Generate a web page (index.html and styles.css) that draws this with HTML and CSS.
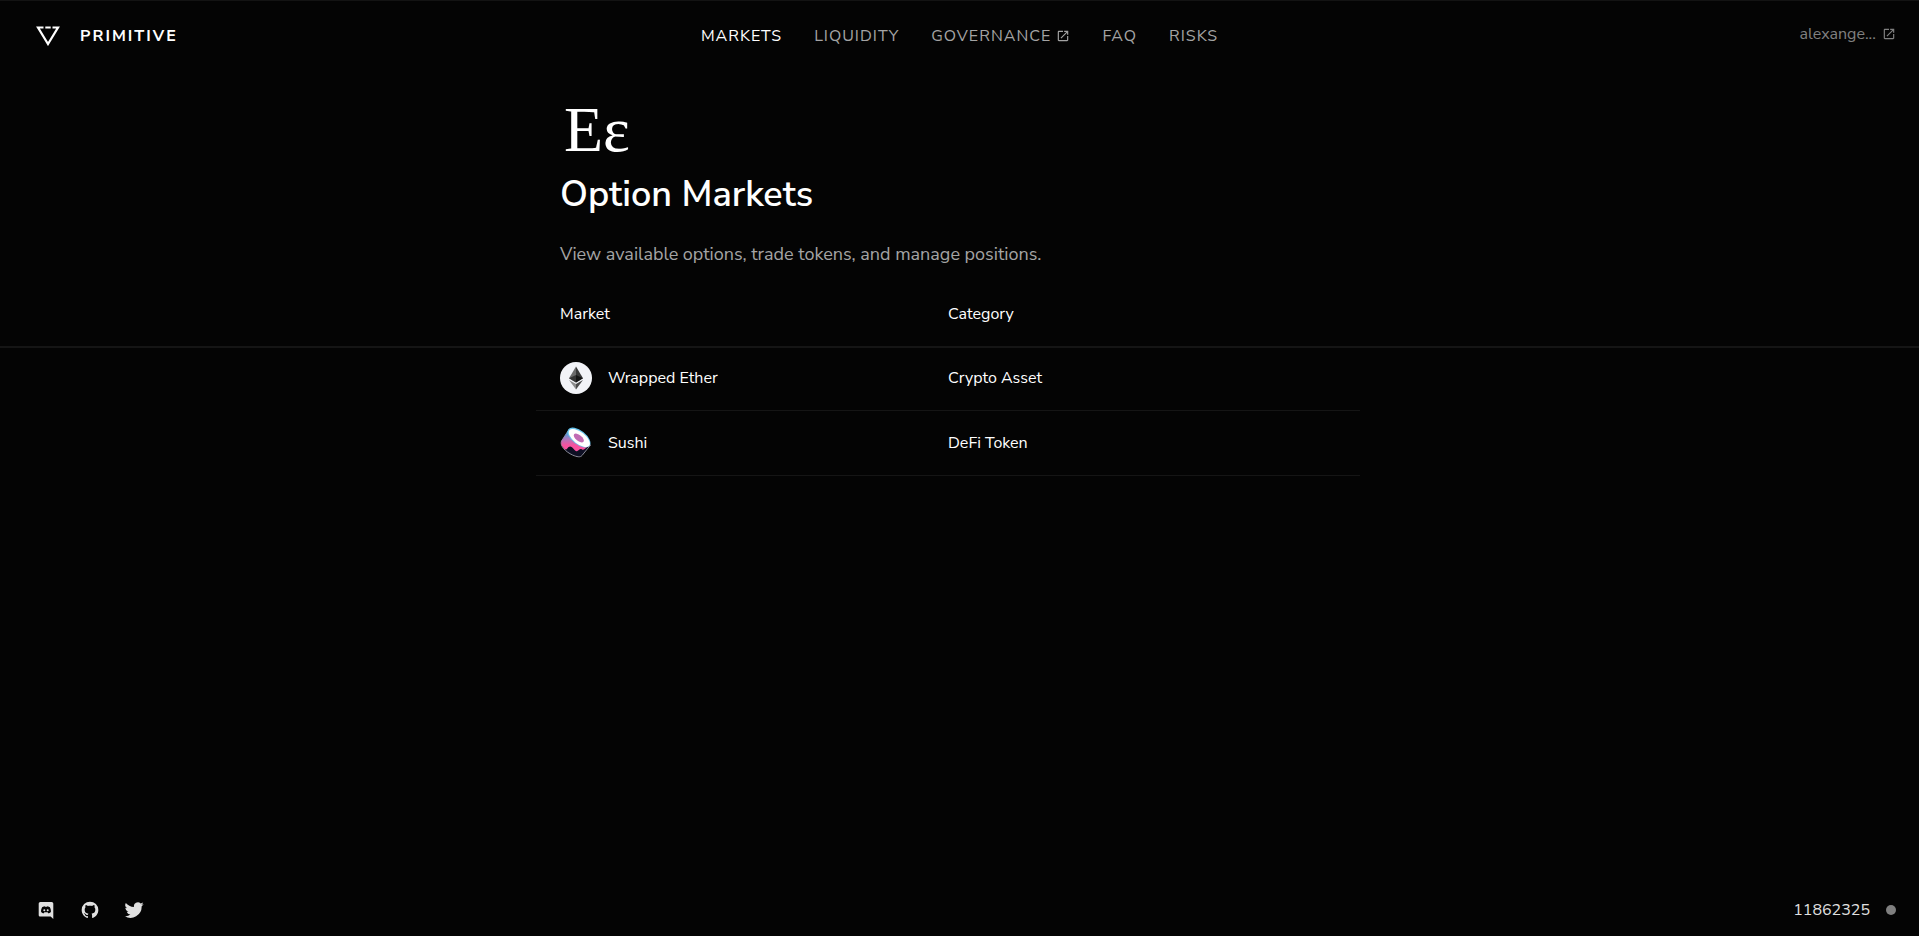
FILE: index.html
```html
<!DOCTYPE html>
<html lang="en">
<head>
<meta charset="utf-8">
<meta name="viewport" content="width=device-width, initial-scale=1">
<title>Primitive</title>
<link rel="stylesheet" href="styles.css">
</head>
<body>
<svg class="sprite" aria-hidden="true">
  <symbol id="launch" viewBox="0 0 24 24"><path d="M19 19H5V5h7V3H5c-1.110 0-2 .9-2 2v14c0 1.100.89 2 2 2h14c1.100 0 2-.9 2-2v-7h-2v7zM14 3v2h3.590l-9.830 9.830 1.410 1.410L19 6.410V10h2V3h-7z"/></symbol>
</svg>
<header class="topbar">
  <a class="brand" href="#">
    <svg class="brand-mark" viewBox="0 0 24 20" aria-hidden="true"><path d="M7.500 1.500H2L12 18 22 1.500h-5.500M9.300 1.500h5.400" fill="none" stroke="#fff" stroke-width="2.200"/></svg>
    <span>PRIMITIVE</span>
  </a>
  <nav class="nav">
    <a class="active" href="#">MARKETS</a>
    <a href="#">LIQUIDITY</a>
    <a href="#">GOVERNANCE <svg class="launch" aria-hidden="true"><use href="#launch"/></svg></a>
    <a href="#">FAQ</a>
    <a href="#">RISKS</a>
  </nav>
  <a class="account" href="#">alexange... <svg class="launch" aria-hidden="true"><use href="#launch"/></svg></a>
</header>
<main>
  <section class="intro wrap">
    <div class="glyph">Eε</div>
    <h1>Option Markets</h1>
    <p>View available options, trade tokens, and manage positions.</p>
  </section>
  <table class="markets">
    <thead>
      <tr class="wrap"><th scope="col">Market</th><th scope="col">Category</th></tr>
    </thead>
    <tbody class="wrap">
      <tr>
        <td>
          <svg class="token" viewBox="0 0 32 32" aria-hidden="true">
            <circle cx="16" cy="16" r="16" fill="#f2f3f7"/>
            <path d="M16 4.500L9 16.300l7 4.100z" fill="#6b6b6b"/><path d="M16 4.500l7 11.800-7 4.100z" fill="#393939"/>
            <path d="M9 16.300l7-3.200v7.300z" fill="#343434"/><path d="M16 13.100l7 3.200-7 4.100z" fill="#151515"/>
            <path d="M9 17.900l7 9.600V22z" fill="#8c8c8c"/><path d="M23 17.900l-7 9.600V22z" fill="#4a4a4a"/>
          </svg>
          Wrapped Ether
        </td>
        <td>Crypto Asset</td>
      </tr>
      <tr>
        <td>
          <svg class="token" viewBox="0 0 32 32" aria-hidden="true">
            <defs><linearGradient id="roll" x1="0" y1="0" x2="0" y2="1"><stop offset="0" stop-color="#27b0e6"/><stop offset=".35" stop-color="#a07dc0"/><stop offset=".7" stop-color="#f6529f"/><stop offset="1" stop-color="#fa52a0"/></linearGradient></defs>
            <path d="M8 4L1.500 14c-2 5 4.500 11 11 14 4.500 2 8 2.500 9.500.5L30.500 18z" fill="#0e0f23" stroke="#8b8c98"/>
            <path d="M8 4L1.500 14c-1 3 .5 5.500 3 8 1 .8 2 .6 3-.8s2.500-2.400 4.500-1 3 4.500 5 4 2.500-3 5-1.800 3-1.400 8.500-4.400z" fill="url(#roll)"/>
            <ellipse cx="19" cy="10.500" rx="13.500" ry="7" transform="rotate(38 19 10.500)" fill="#68c4ec"/>
            <ellipse cx="19.300" cy="11" rx="12.600" ry="6" transform="rotate(38 19.300 11)" fill="#fff"/>
            <ellipse cx="18.800" cy="11" rx="6" ry="3" transform="rotate(38 18.800 11)" fill="#c16bb4"/>
          </svg>
          Sushi
        </td>
        <td>DeFi Token</td>
      </tr>
    </tbody>
  </table>
</main>
<footer class="footer">
  <div class="social">
    <a href="#" aria-label="Discord"><svg viewBox="0 0 20 20"><path fill-rule="evenodd" d="M4.400 2h11.200c1 0 1.700.8 1.700 1.700V19l-2.700-2.400H4.400c-1 0-1.700-.8-1.700-1.700V3.700C2.700 2.800 3.400 2 4.400 2zM8.700 6.300c-1.200.1-2.200.6-2.600.9-.8 1.500-1.100 3.200-1 4.800.8.900 1.800 1.200 2.700 1.200l.6-.9h3.200l.6.9c.9 0 1.900-.3 2.700-1.200.1-1.600-.2-3.300-1-4.800-.4-.3-1.400-.8-2.600-.9l-.3.500H9zM8.300 9.300a1 1 0 110 2 1 1 0 010-2zM11.700 9.300a1 1 0 110 2 1 1 0 010-2z"/></svg></a>
    <a href="#" aria-label="GitHub"><svg viewBox="0 0 24 24"><path d="M12 2A10 10 0 002 12c0 4.420 2.870 8.170 6.840 9.500.5.080.66-.23.66-.5v-1.690c-2.770.6-3.360-1.340-3.360-1.340-.46-1.160-1.110-1.470-1.110-1.470-.91-.62.070-.6.070-.6 1 .07 1.530 1.030 1.530 1.030.87 1.520 2.340 1.070 2.910.83.090-.65.350-1.090.63-1.340-2.220-.25-4.550-1.110-4.550-4.920 0-1.110.38-2 1.030-2.710-.1-.25-.45-1.290.1-2.640 0 0 .84-.27 2.750 1.020.79-.22 1.650-.33 2.500-.33s1.710.11 2.500.33c1.910-1.290 2.750-1.020 2.750-1.020.55 1.350.2 2.390.1 2.640.65.710 1.030 1.600 1.030 2.710 0 3.820-2.340 4.660-4.570 4.910.36.310.69.920.69 1.850V21c0 .27.160.59.670.5C19.140 20.160 22 16.420 22 12A10 10 0 0012 2z"/></svg></a>
    <a href="#" aria-label="Twitter"><svg viewBox="0 0 24 24"><path d="M23.600 4.900c-.9.400-1.800.6-2.700.8 1-.6 1.700-1.500 2.100-2.600-.9.500-1.900.9-3 1.100a4.700 4.700 0 00-8 4.300C8 8.300 4.500 6.400 2.200 3.600a4.700 4.700 0 001.500 6.300c-.8 0-1.500-.2-2.100-.6v.1c0 2.300 1.600 4.200 3.800 4.600-.7.200-1.400.2-2.100.1.600 1.900 2.300 3.200 4.400 3.300A9.500 9.500 0 01.700 19.300 13.400 13.400 0 0021.200 7.400c.9-.7 1.700-1.500 2.400-2.500z"/></svg></a>
  </div>
  <div class="block"><span>11862325</span><span class="dot"></span></div>
</footer>
</body>
</html>
```
FILE: styles.css
```css
* { box-sizing: border-box; }
body {
  margin: 0;
  min-height: 100vh;
  display: flex;
  flex-direction: column;
  background: #040404;
  border-top: 1px solid #131313;
  color: #fff;
  font: 16px/24px "Nunito Sans", "Open Sans", sans-serif;
}
a { color: inherit; text-decoration: none; }
.sprite { display: none; }
.topbar {
  display: grid;
  grid-template-columns: 1fr auto 1fr;
  align-items: center;
  height: 70px;
  padding: 0 23px;
}
.brand {
  display: flex;
  align-items: center;
  gap: 20px;
  padding-left: 13px;
  font-weight: 700;
  letter-spacing: 2px;
}
.brand-mark { width: 24px; height: 20px; }
.nav { display: flex; gap: 32px; color: #a4a4a4; letter-spacing: 1px; }
.nav .active { color: #fff; }
.launch { width: 14px; height: 14px; fill: currentColor; vertical-align: -2px; }
.account { justify-self: end; color: #808080; padding-bottom: 4px; }
.account .launch { margin-left: 2px; }
.wrap { width: 100%; max-width: 847px; margin: 0 auto; padding-right: 23px; }
.intro { padding-left: 24px; padding-top: 24px; }
.glyph { padding-left: 4px; font: 64px/70px "Liberation Serif", serif; }
h1 { margin: 6px 0 0; font-size: 36px; line-height: 48px; font-weight: 600; }
.intro p { margin: 22px 0 0; font-size: 18px; line-height: 26px; color: #a4a4a4; }
.markets, .markets thead, .markets tbody { display: block; }
.markets tr { display: grid; grid-template-columns: 388px 1fr; align-items: center; padding-left: 24px; }
.markets th, .markets td { padding: 0; text-align: left; font-weight: 400; }
.markets thead { border-bottom: 2px solid #151515; }
.markets thead tr { height: 79px; padding-top: 14px; }
.markets tbody tr { height: 65px; border-bottom: 1px solid #151515; }
.markets tbody { margin-top: -2px; padding-right: 23px; }
.markets td { display: flex; align-items: center; gap: 16px; }
.token { width: 32px; height: 32px; }
.footer {
  display: flex;
  justify-content: space-between;
  align-items: center;
  margin-top: auto;
  height: 52px;
  padding: 0 23px 0 36px;
}
.social { display: flex; gap: 24px; }
.social svg { display: block; width: 20px; height: 20px; fill: #e0e0e0; }
.block { display: flex; align-items: center; gap: 16px; color: #e0e0e0; }
.dot { width: 10px; height: 10px; border-radius: 50%; background: #7f7f7f; }
```
